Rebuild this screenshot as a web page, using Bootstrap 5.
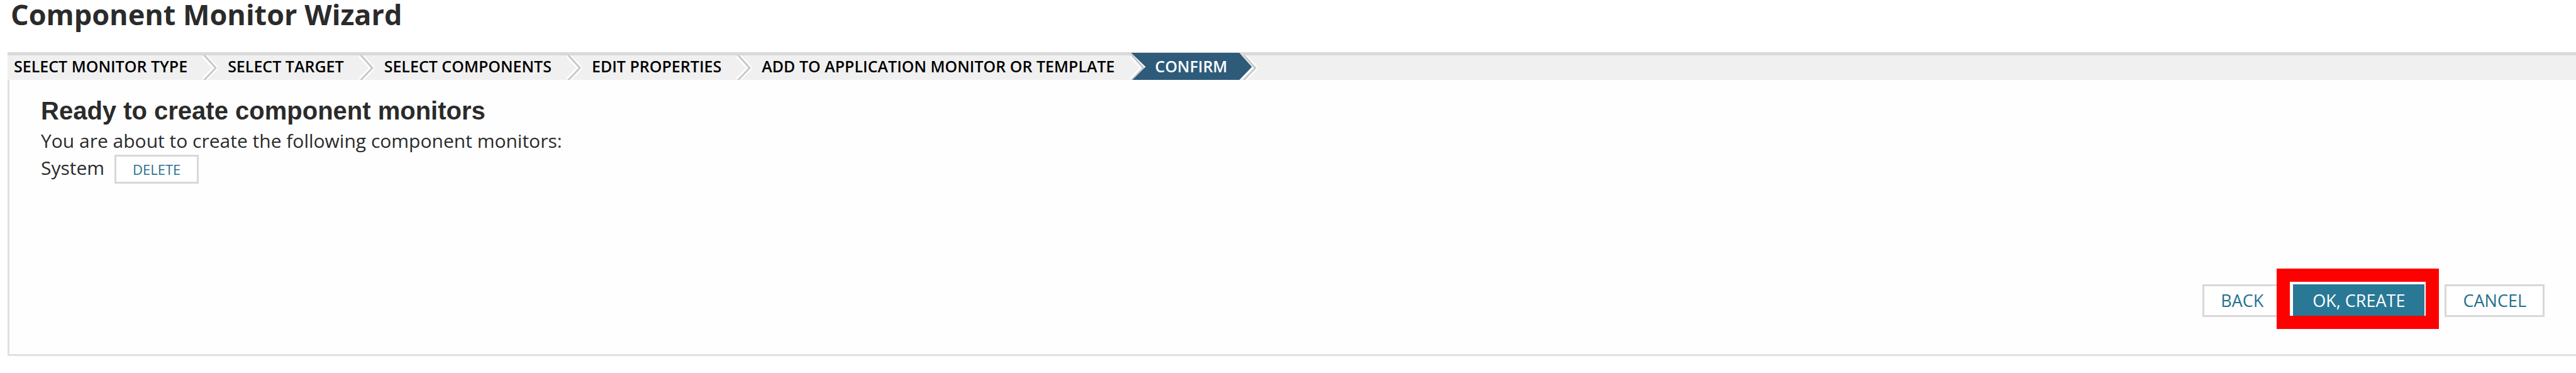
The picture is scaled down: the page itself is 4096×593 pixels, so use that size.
<!DOCTYPE html>
<html lang="en">
<head>
<meta charset="utf-8">
<meta name="viewport" content="width=device-width, initial-scale=1">
<title>Component Monitor Wizard</title>
<link rel="stylesheet" href="https://cdn.jsdelivr.net/npm/bootstrap@5.3.0/dist/css/bootstrap.min.css">
<style>
body { font-family: "Open Sans", sans-serif; color: #2b2b2b; background: #fff; font-size: 30px; line-height: 43px; }
.page-title { font-size: 45px; line-height: 45px; font-weight: 700; margin: 0 0 38px 17px; }
.wizard { margin-left: 12px; border-left: 3px solid #e0e0e0; border-bottom: 3px solid #e0e0e0; background: #fefefe; }
.steps { background: #f0f0f0; border-top: 5px solid #d9d9d9; margin-left: -3px; padding-left: 10px; font-size: 25px; line-height: 35px; font-weight: 600; }
.steps a { color: #000; }
.steps svg { width: 24px; height: 39px; margin: 0 16px 0 24px; }
.steps .current { margin: -4px 0 0 -38px; padding: 4px 39px 0 38px; background: #2e5b7a; clip-path: polygon(0 0, calc(100% - 20px) 0, 100% 52%, calc(100% - 20px) 100%, 2px 100%, 23px 52%); }
.steps .current a { color: #fff; }
.steps .last-mark { margin: 0 0 0 -16px; }
.content-pad { padding: 26px 50px 59px; }
.content-pad h2 { font: 700 40px/46px "Liberation Sans", sans-serif; margin: 0 0 3px; }
.wz-btn { border: 3px solid #d8d8d8; border-radius: 0; background: #fff; color: #24708f; font-size: 27px; line-height: 46px; padding: 0 26px; }
.wz-btn-sm { font-size: 22px; line-height: 40px; }
.wz-btn-go { background: #297996; border-color: #297996; color: #fff; padding: 0 28px; }
.actions { margin-top: 160px; }
.spot-wrap { margin: 0 32px 0 18px; }
.spot { top: -25px; bottom: -19px; left: -26px; right: -23px; border: 21px solid #f00; pointer-events: none; }
</style>
</head>
<body>
<svg class="d-none" aria-hidden="true"><symbol id="chevron" viewBox="0 0 24 39"><g fill="none"><path d="M2 0 21 20 2 39" stroke="#fff" stroke-width="8"/><path d="M2-1 21 20 2 40" stroke="#c8c8c8" stroke-width="3"/></g></symbol></svg>
<h1 class="page-title">Component Monitor Wizard</h1>
<main class="wizard">
  <ol class="steps list-unstyled d-flex mb-0 text-nowrap">
    <li class="d-flex"><a class="text-decoration-none" href="#">SELECT MONITOR TYPE</a><svg aria-hidden="true"><use href="#chevron"/></svg></li>
    <li class="d-flex"><a class="text-decoration-none" href="#">SELECT TARGET</a><svg aria-hidden="true"><use href="#chevron"/></svg></li>
    <li class="d-flex"><a class="text-decoration-none" href="#">SELECT COMPONENTS</a><svg aria-hidden="true"><use href="#chevron"/></svg></li>
    <li class="d-flex"><a class="text-decoration-none" href="#">EDIT PROPERTIES</a><svg aria-hidden="true"><use href="#chevron"/></svg></li>
    <li class="d-flex"><a class="text-decoration-none" href="#">ADD TO APPLICATION MONITOR OR TEMPLATE</a><svg aria-hidden="true"><use href="#chevron"/></svg></li>
    <li class="current" aria-current="step"><a class="text-decoration-none" href="#">CONFIRM</a></li>
    <li class="d-flex" aria-hidden="true"><svg class="last-mark"><use href="#chevron"/></svg></li>
  </ol>
  <section class="content-pad">
    <h2>Ready to create component monitors</h2>
    <p class="mb-0">You are about to create the following component monitors:</p>
    <div class="d-flex align-items-baseline gap-3"><span>System</span><button type="button" class="btn wz-btn wz-btn-sm">DELETE</button></div>
    <div class="actions d-flex justify-content-end">
      <button type="button" class="btn wz-btn">BACK</button>
      <div class="spot-wrap position-relative"><button type="button" class="btn wz-btn wz-btn-go d-block">OK, CREATE</button><div class="spot position-absolute"></div></div>
      <button type="button" class="btn wz-btn">CANCEL</button>
    </div>
  </section>
</main>
<script src="https://cdn.jsdelivr.net/npm/bootstrap@5.3.0/dist/js/bootstrap.bundle.min.js"></script>
</body>
</html>
